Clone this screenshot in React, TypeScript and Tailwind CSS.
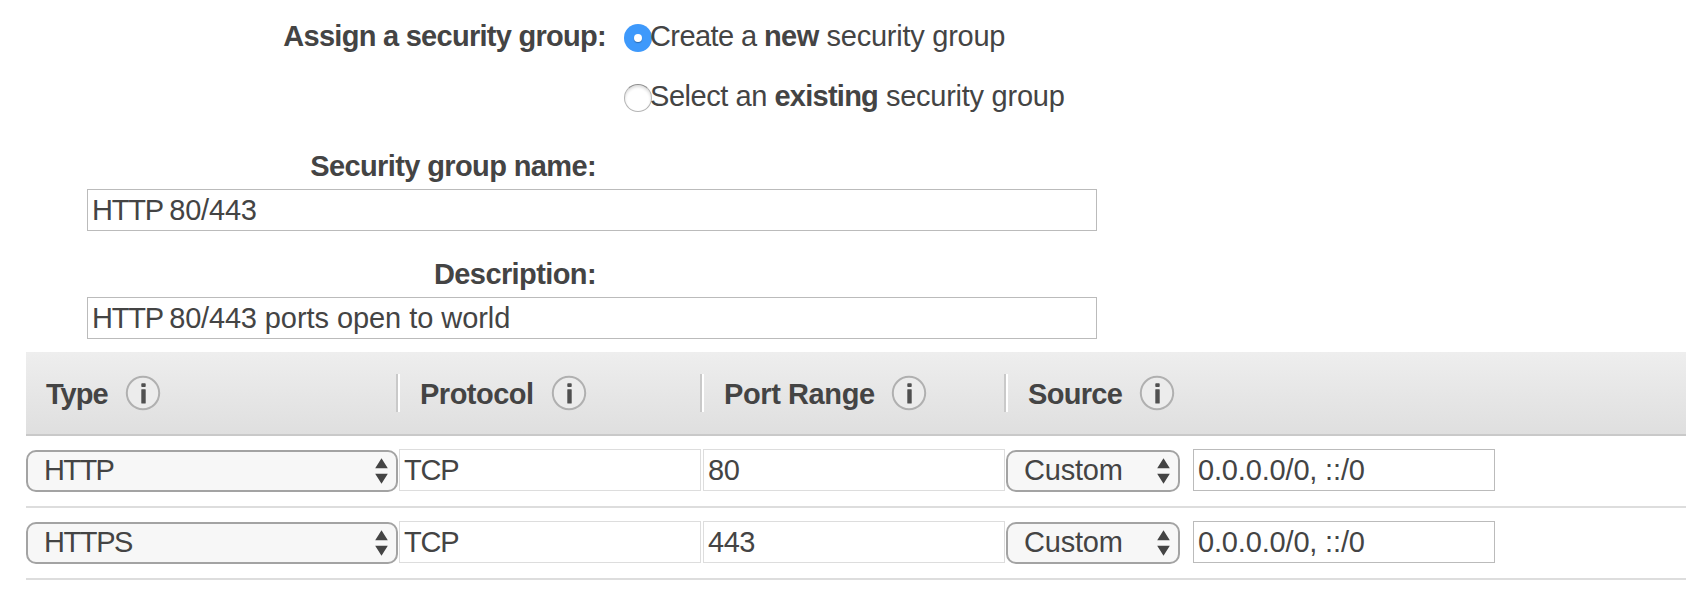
import type { ReactNode } from "react";

function Radio({ checked }: { checked?: boolean }) {
  return checked ? (
    <span className="flex h-7 w-7 shrink-0 items-center justify-center rounded-full bg-[#3e99fb]">
      <span className="h-2 w-2 rounded-full bg-white shadow-[0_1px_1px_rgba(0,0,0,0.3)]" />
    </span>
  ) : (
    <span className="h-7 w-7 shrink-0 rounded-full border border-[#b4b4b4] border-t-[#8f8f8f] bg-white shadow-[inset_0_2px_3px_rgba(0,0,0,0.14)]" />
  );
}

function InfoIcon() {
  return (
    <svg viewBox="0 0 36 36" className="h-9 w-9 shrink-0" fill="none">
      <circle cx="18" cy="18" r="16.2" fill="#ececec" stroke="#b0b0b0" strokeWidth="2" />
      <rect x="16.3" y="8.2" width="4.4" height="3.8" rx="0.8" fill="#505050" />
      <rect x="16.3" y="14.2" width="4.4" height="14.3" rx="0.6" fill="#505050" />
    </svg>
  );
}

function Select({ children, className }: { children: ReactNode; className: string }) {
  return (
    <div className={`mt-px flex h-[42px] shrink-0 items-center justify-between rounded-[10px] border-2 border-[#a3a3a3] bg-[#f7f7f7] pr-2 pl-4 ${className}`}>
      <span className="-mt-0.5 leading-8">{children}</span>
      <svg viewBox="0 0 13 26" className="h-[26px] w-[13px]" fill="#444">
        <path d="M6.5 0.3 12.8 10.3H0.2ZM0.2 15.7H12.8L6.5 25.7Z" />
      </svg>
    </div>
  );
}

function Field({ children, className }: { children: ReactNode; className: string }) {
  return (
    <div className={`flex h-[42px] shrink-0 items-center border bg-white pl-1 leading-8 ${className}`}>
      <span className="-mt-px whitespace-pre">{children}</span>
    </div>
  );
}

function HeaderCell({ label, className, labelClass, divider = true }: { label: string; className: string; labelClass: string; divider?: boolean }) {
  return (
    <div className={`flex h-[38px] items-center pl-5 font-bold ${className}`}>
      <span className={`mt-0.5 shrink-0 leading-8 ${labelClass}`}>{label}</span>
      <InfoIcon />
      {divider && <span className="ml-auto h-[38px] w-1 border-l-2 border-[#c9c9c9] bg-white" />}
    </div>
  );
}

const rules = [
  { type: "HTTP", tracking: "tracking-[-1.6px]", protocol: "TCP", port: "80", source: "0.0.0.0/0, ::/0" },
  { type: "HTTPS", tracking: "tracking-[-1.4px]", protocol: "TCP", port: "443", source: "0.0.0.0/0, ::/0" },
];

export default function App() {
  return (
    <main className="h-[594px] w-[1706px] overflow-hidden bg-white font-['Liberation_Sans',Arial,sans-serif] text-[29px] leading-8 whitespace-nowrap text-[#444]">
      <section className="flex pt-5">
        <div className="w-[606px] text-right font-bold tracking-[-0.72px]">Assign a security group:</div>
        <div className="ml-[18px] flex flex-col gap-7">
          <div className="flex h-8">
            <span className="mt-1 h-7"><Radio checked /></span>
            <span className="-ml-0.5 tracking-[-0.25px]"><span className="tracking-[-0.6px]">Create a </span><b className="tracking-[-0.5px]">new</b> security group</span>
          </div>
          <div className="flex h-8">
            <span className="mt-1 flex h-7"><Radio /></span>
            <span className="-ml-0.5 tracking-[-0.25px]"><span className="tracking-[-0.45px]">Select an </span><b className="tracking-[-0.75px]">existing</b> security group</span>
          </div>
        </div>
      </section>
      <section className="mt-[38px] pl-[87px]">
        <div className="w-[509px] text-right font-bold tracking-[-0.62px]">Security group name:</div>
        <Field className="mt-[7px] w-[1010px] border-[#bbb]">
          <span className="tracking-[-1.2px]">HTTP </span>
          <span className="tracking-[-0.2px]">80/443</span>
        </Field>
      </section>
      <section className="mt-[27px] pl-[87px]">
        <div className="w-[509px] text-right font-bold tracking-[-0.6px]">Description:</div>
        <Field className="mt-[7px] w-[1010px] border-[#bbb]">
          <span className="tracking-[-1.2px]">HTTP </span>
          <span className="tracking-[-0.2px]">80/443</span>
          <span className="tracking-[-0.06px]"> ports open to world</span>
        </Field>
      </section>
      <section className="mt-[13px] ml-[26px] w-[1660px]">
        <div className="flex h-[84px] border-b-2 border-[#c9c9c9] bg-linear-to-b from-[#eee] to-[#dfdfdf] pt-[22px]">
          <HeaderCell label="Type" className="w-[374px]" labelClass="w-[79px] tracking-[-1px]" />
          <HeaderCell label="Protocol" className="w-[304px]" labelClass="w-[131px] tracking-[-0.5px]" />
          <HeaderCell label="Port Range" className="w-[304px]" labelClass="w-[167px] tracking-[-0.4px]" />
          <HeaderCell label="Source" className="" labelClass="w-[111px] tracking-[-0.7px]" divider={false} />
        </div>
        {rules.map((r) => (
          <div key={r.type} className="flex h-[72px] border-b-2 border-[#ddd] pt-[13px]">
            <Select className={`w-[372px] ${r.tracking}`}>{r.type}</Select>
            <Field className="ml-px w-[302px] border-[#ddd] tracking-[-1.2px]">{r.protocol}</Field>
            <Field className="ml-0.5 w-[302px] border-[#ddd] tracking-[-0.5px]">{r.port}</Field>
            <Select className="ml-px w-[174px] tracking-[-0.2px]">Custom</Select>
            <Field className="ml-[13px] w-[302px] border-[#bbb] tracking-[-0.17px]">{r.source}</Field>
          </div>
        ))}
      </section>
    </main>
  );
}
